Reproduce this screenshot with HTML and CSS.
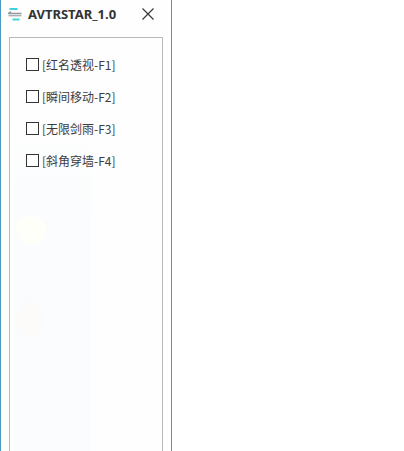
FILE: index.html
```html
<!DOCTYPE html>
<html lang="zh">
<head>
<meta charset="utf-8">
<title>AVTRSTAR_1.0</title>
<link rel="stylesheet" href="styles.css">
</head>
<body>
<div class="window">
  <div class="titlebar">
    <svg class="logo" width="14" height="13" viewBox="0 0 14 13" aria-hidden="true">
      <path d="M1.5 1H9.5" stroke="#3fd0dc" stroke-width="2" fill="none"/>
      <path d="M3 3.5L.5 5.5H13.5" stroke="#8f9599" stroke-width="1.3" fill="none"/>
      <path d="M.5 7.7H13.5" stroke="#a4a9ad" stroke-width="1.3" fill="none"/>
      <path d="M4.5 11.5H11.5" stroke="#3fd9d2" stroke-width="2" fill="none"/>
    </svg>
    <span class="title">AVTRSTAR_1.0</span>
    <svg class="close" width="12" height="12" viewBox="0 0 12 12" aria-hidden="true">
      <path d="M.5.5L11.5 11.5M11.5.5L.5 11.5" stroke="#333" stroke-width="1.1" fill="none"/>
    </svg>
  </div>
  <div class="group">
    <div class="tint"></div>
    <div class="ghost ghost-sun"></div>
    <div class="ghost ghost-bird"></div>
    <label class="row"><span class="box"></span><span class="text">[红名透视-F1]</span></label>
    <label class="row"><span class="box"></span><span class="text">[瞬间移动-F2]</span></label>
    <label class="row"><span class="box"></span><span class="text">[无限剑雨-F3]</span></label>
    <label class="row"><span class="box"></span><span class="text">[斜角穿墙-F4]</span></label>
  </div>
</div>
</body>
</html>
```

FILE: styles.css
```css
html, body {
  margin: 0;
  height: 100%;
  background: #fff;
  overflow: hidden;
}
.window {
  box-sizing: border-box;
  width: 172px;
  height: 451px;
  border-left: 1px solid #4a9ac4;
  border-right: 1px solid #4a9ac4;
  display: flex;
  flex-direction: column;
  background: #fefefe;
  font-family: "Noto Sans CJK SC", "Noto Sans", sans-serif;
}
.titlebar {
  height: 37px;
  flex: none;
  display: flex;
  align-items: center;
  padding: 0 17px 9px 7px;
  box-sizing: border-box;
}
.logo { flex: none; }
.title {
  margin-left: 6px;
  font-family: "Noto Sans", sans-serif;
  font-size: 13px;
  font-weight: 700;
  color: #333;
  flex: 1;
  white-space: nowrap;
}
.close { flex: none; }
.group {
  position: relative;
  flex: 1;
  margin: 0 8px 0 8px;
  border: 1px solid #b9b9b9;
  border-bottom: 0;
  padding: 16px 0 0 16px;
  display: flex;
  flex-direction: column;
  gap: 12px;
  background: #fefefe;
}
.tint {
  position: absolute;
  left: 4px;
  top: 0;
  bottom: 0;
  width: 77px;
  background: linear-gradient(180deg, #fefefe 20%, #fafcfd 45%, #fafcfd 100%);
}
.ghost {
  position: absolute;
  border-radius: 50%;
}
.ghost-sun {
  left: 6px;
  top: 178px;
  width: 30px;
  height: 28px;
  background: #fffffa;
}
.ghost-bird {
  left: 7px;
  top: 264px;
  width: 26px;
  height: 34px;
  background: #fdfafa;
}
.row {
  position: relative;
  height: 20px;
  display: flex;
  align-items: center;
  gap: 3px;
}
.box {
  box-sizing: border-box;
  width: 13px;
  height: 13px;
  border: 1px solid #333;
  background: #fff;
  flex: none;
}
.text {
  font-size: 12px;
  color: #3c3c3c;
  white-space: nowrap;
}
```
